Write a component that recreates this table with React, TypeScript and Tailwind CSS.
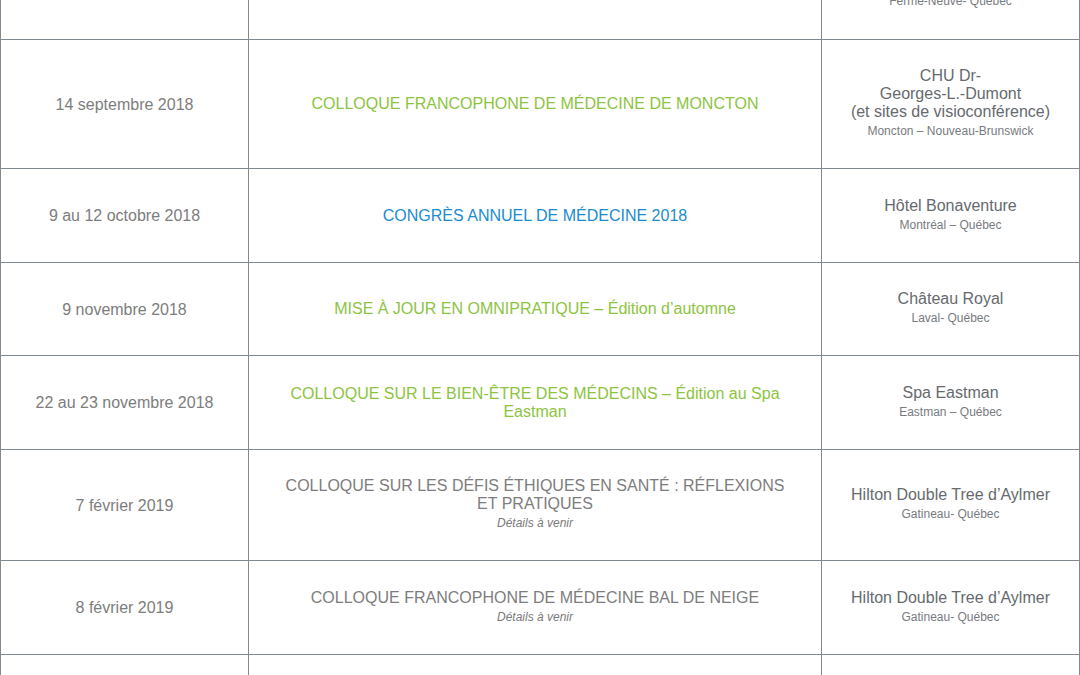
import React from "react";

type Row = {
  h: string;
  date?: string;
  title?: React.ReactNode;
  titleColor?: string;
  details?: boolean;
  venue?: React.ReactNode;
  place?: string;
};

const GREEN = "text-[#8cc43f]";
const BLUE = "text-[#1a8ccf]";
const GRAY = "text-[#7d7d7d]";

const rows: Row[] = [
  { h: "h-[96px]", venue: "Auberge", place: "Ferme-Neuve- Québec" },
  {
    h: "h-[129px]",
    date: "14 septembre 2018",
    title: "COLLOQUE FRANCOPHONE DE MÉDECINE DE MONCTON",
    titleColor: GREEN,
    venue: (
      <>
        CHU Dr-
        <br />
        Georges-L.-Dumont
        <br />
        (et sites de visioconférence)
      </>
    ),
    place: "Moncton – Nouveau-Brunswick",
  },
  {
    h: "h-[94px]",
    date: "9 au 12 octobre 2018",
    title: "CONGRÈS ANNUEL DE MÉDECINE 2018",
    titleColor: BLUE,
    venue: "Hôtel Bonaventure",
    place: "Montréal – Québec",
  },
  {
    h: "h-[93px]",
    date: "9 novembre 2018",
    title: "MISE À JOUR EN OMNIPRATIQUE – Édition d’automne",
    titleColor: GREEN,
    venue: "Château Royal",
    place: "Laval- Québec",
  },
  {
    h: "h-[94px]",
    date: "22 au 23 novembre 2018",
    title: "COLLOQUE SUR LE BIEN-ÊTRE DES MÉDECINS – Édition au Spa Eastman",
    titleColor: GREEN,
    venue: "Spa Eastman",
    place: "Eastman – Québec",
  },
  {
    h: "h-[111px]",
    date: "7 février 2019",
    title: "COLLOQUE SUR LES DÉFIS ÉTHIQUES EN SANTÉ : RÉFLEXIONS ET PRATIQUES",
    titleColor: GRAY,
    details: true,
    venue: "Hilton Double Tree d’Aylmer",
    place: "Gatineau- Québec",
  },
  {
    h: "h-[94px]",
    date: "8 février 2019",
    title: "COLLOQUE FRANCOPHONE DE MÉDECINE BAL DE NEIGE",
    titleColor: GRAY,
    details: true,
    venue: "Hilton Double Tree d’Aylmer",
    place: "Gatineau- Québec",
  },
  { h: "h-[60px]" },
];

export default function App() {
  return (
    <div
      className="w-[1080px] h-[675px] overflow-hidden bg-white"
      style={{ fontFamily: '"Liberation Sans", Arial, sans-serif' }}
    >
      <div className="mt-[-56px] w-[1080px]">
        {rows.map((r, i) => (
          <div
            key={i}
            className={`grid grid-cols-[249px_573px_258px] border-b border-[#7f8992] ${r.h}`}
          >
            <div className="flex items-center justify-center border-l border-r border-[#7f8992] pt-px text-[16px] leading-[18px] text-[#7d7d7d] text-center">
              {r.date}
            </div>
            <div className="flex flex-col items-center justify-center border-r border-[#7f8992] px-[30px] text-center">
              {r.title && (
                <div className={`text-[16px] leading-[18px] ${r.titleColor}`}>{r.title}</div>
              )}
              {r.details && (
                <div className="text-[12px] leading-[20px] italic text-[#7a7a7a]">Détails à venir</div>
              )}
            </div>
            <div className="flex flex-col items-center justify-center border-r border-[#7f8992] px-[8px] text-center">
              {r.venue && (
                <div className="text-[16px] leading-[18px] text-[#666a6e]">{r.venue}</div>
              )}
              {r.place && (
                <div className="text-[12px] leading-[20px] text-[#777b80]">{r.place}</div>
              )}
            </div>
          </div>
        ))}
      </div>
    </div>
  );
}
